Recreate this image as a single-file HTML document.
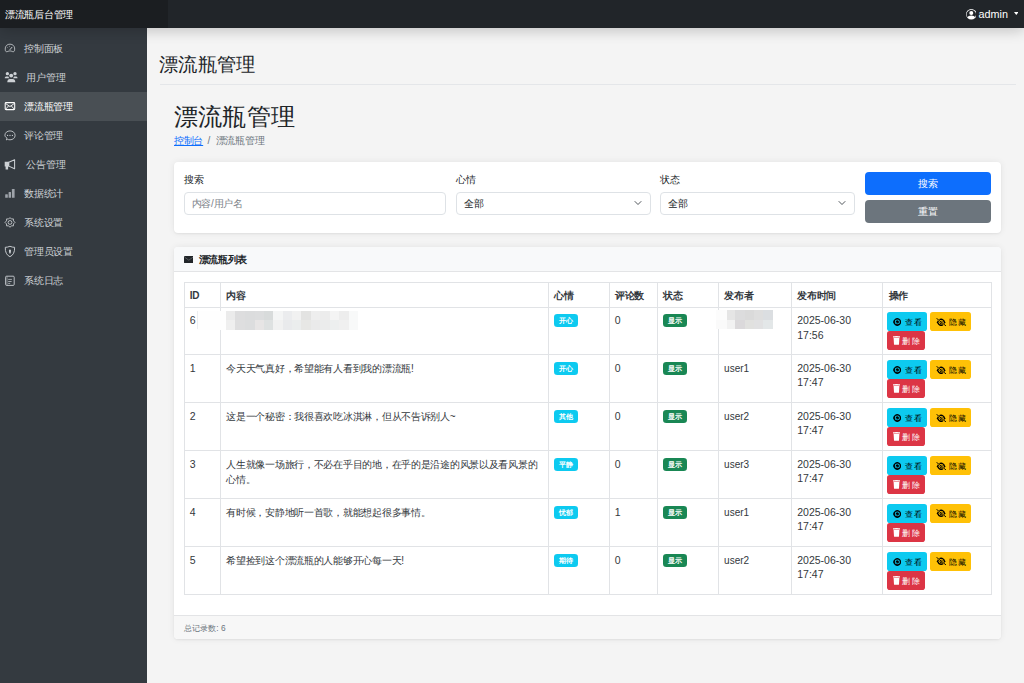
<!DOCTYPE html>
<html><head><meta charset="utf-8">
<style>
*{box-sizing:border-box;margin:0;padding:0}
html,body{width:1024px;height:683px;overflow:hidden}
body{background:#f4f4f4;font-family:"Liberation Sans",sans-serif;color:#212529;position:relative;font-size:9.7px}
.abs{position:absolute}
#nav{left:0;top:0;width:1024px;height:28px;background:#212529;box-shadow:0 3px 14px rgba(0,0,0,.2);z-index:5}
#brand{left:0;top:0;width:167.7px;height:28px;background:#1b1e21;color:#fff;font-size:10px;letter-spacing:-0.24px;line-height:29.5px;padding-left:4.8px;white-space:nowrap}
#user{right:0;top:0;height:27.5px;color:#fff}
#side{left:0;top:28px;width:147px;height:660px;background:#343a40;z-index:4}
.item{position:absolute;left:0;width:147px;height:29px;color:#cfd3d7;font-size:10px;letter-spacing:-0.28px;line-height:29px;white-space:nowrap}
.item.active{background:#494f54;color:#fff}
.item span{position:absolute;left:24.2px;top:0}
h1.t1{position:absolute;left:159.4px;top:50.5px;font-size:19px;font-weight:normal;line-height:28px;color:#212529;white-space:nowrap;transform:scaleX(1.017);transform-origin:0 0}
#hr{left:160px;top:84px;width:856px;height:1px;background:#e4e6e9}
h1.t2{position:absolute;left:173.5px;top:101px;font-size:24px;font-weight:normal;line-height:32px;color:#212529;white-space:nowrap;transform:scaleX(1.008);transform-origin:0 0}
#bc{left:174px;top:134.4px;font-size:10px;letter-spacing:-0.28px;line-height:14px;color:#6c757d;white-space:nowrap}
#bc a{color:#0d6efd;text-decoration:underline}
.card{position:absolute;left:174px;width:826.9px;background:#fff;border-radius:4px;box-shadow:0 1px 2px rgba(0,0,0,.05),0 0 7px rgba(0,0,0,.07)}
#c1{top:162.3px;height:70.4px}
#c2{top:247.1px;height:391.7px;overflow:hidden}
.lbl{position:absolute;top:173px;font-size:10px;letter-spacing:-0.28px;line-height:14px;color:#212529;white-space:nowrap}
.inp{position:absolute;top:191.5px;height:23px;border:1px solid #dee2e6;border-radius:4px;background:#fff;font-size:10px;letter-spacing:-0.28px;line-height:21px;padding-left:7px;white-space:nowrap}
.inp.ph{color:#7b8188}
.inp svg{position:absolute;right:8px;top:7px}
.btn{position:absolute;left:864.8px;width:126.5px;height:23px;border-radius:4px;color:#fff;font-size:9.7px;line-height:23px;text-align:center}
#chead{left:0;top:0;width:100%;height:24.6px;background:#f8f9fa;border-bottom:1px solid #e3e4e6}
#chead svg{position:absolute;left:9.5px;top:8.6px}
#chead span{position:absolute;left:24.5px;top:5.8px;font-size:10px;letter-spacing:-0.3px;line-height:14px;font-weight:bold;white-space:nowrap}
#cfoot{left:0;top:367.8px;width:100%;height:24px;background:#f7f7f7;border-top:1px solid #e3e4e6}
#cfoot span{position:absolute;left:9.6px;top:6px;font-size:8.3px;letter-spacing:.15px;line-height:12px;color:#6c757d;white-space:nowrap}
table{position:absolute;left:183.5px;top:282px;width:807.8px;border-collapse:collapse;table-layout:fixed;font-size:10.5px;line-height:14.5px;color:#33383d}
.cj{font-size:10px;letter-spacing:-0.28px;line-height:15px}
th.cj{line-height:14.5px}
.u{font-size:10px;padding-top:6.5px}
td,th{border:1px solid #e1e3e6;padding:5.5px 5.3px 3.5px;vertical-align:top;text-align:left}
th{font-weight:bold;height:24.6px;padding-top:6px;padding-bottom:3px}
tbody td{height:47.9px}
.badge{display:inline-block;height:13px;line-height:13px;padding:0 4.5px;border-radius:3.3px;color:#fff;font-size:7.3px;font-weight:bold;margin-top:1.2px;letter-spacing:.3px;vertical-align:top}
.b-info{background:#0dcaf0}
.b-ok{background:#198754}
.sb{position:absolute;height:18.8px;border-radius:2.8px}
.sb .ic{position:absolute}
.sb span{position:absolute;top:5.8px;font-size:8px;line-height:10px;letter-spacing:1.4px;font-weight:normal;white-space:nowrap}
.s-info{background:#0dcaf0;color:#000}
.s-warn{background:#ffc107;color:#000}
.s-dang{background:#dc3545;color:#fff}
#mos i{position:absolute;display:block}
</style></head><body>

<div id="nav" class="abs">
  <div id="brand" class="abs">漂流瓶后台管理</div>
  <svg class="abs" style="left:965.8px;top:9px" width="10.6" height="10.6" viewBox="0 0 16 16" fill="#fff"><path d="M11 6a3 3 0 1 1-6 0 3 3 0 0 1 6 0z"/><path fill-rule="evenodd" d="M0 8a8 8 0 1 1 16 0A8 8 0 0 1 0 8zm8-7a7 7 0 0 0-5.468 11.37C3.242 11.226 4.805 10 8 10s4.757 1.225 5.468 2.37A7 7 0 0 0 8 1z"/></svg>
  <div class="abs" style="left:978.6px;top:0.6px;font-size:10.8px;line-height:27.5px;color:#fff">admin</div>
  <svg class="abs" style="left:1013.5px;top:12.3px" width="4.6" height="3" viewBox="0 0 10 6"><path d="M0 0h10L5 6z" fill="#fff"/></svg>
</div>

<div id="side" class="abs">
  <div class="item" style="top:6px"><span>控制面板</span></div>
  <div class="item" style="top:35px"><span style="left:26.4px">用户管理</span></div>
  <div class="item active" style="top:64px"><span>漂流瓶管理</span></div>
  <div class="item" style="top:93px"><span>评论管理</span></div>
  <div class="item" style="top:122px"><span style="left:26.4px">公告管理</span></div>
  <div class="item" style="top:151px"><span>数据统计</span></div>
  <div class="item" style="top:180px"><span>系统设置</span></div>
  <div class="item" style="top:209px"><span>管理员设置</span></div>
  <div class="item" style="top:238px"><span>系统日志</span></div>
</div>

<svg id="sicons" class="abs" style="left:0;top:0;z-index:7" width="147" height="300" viewBox="0 0 147 300" fill="none" stroke="#cdd1d5" stroke-width="0.72">
<!-- speedometer -->
<path d="M5.4 50.6 C4.6 46.5 6.8 44.2 9.95 44.2 C13.1 44.2 15.3 46.5 14.5 50.6 C14.2 51.8 13 52 11.8 51.3 C10.6 50.8 9.3 50.8 8.1 51.3 C6.9 52 5.7 51.8 5.4 50.6Z" stroke-width="0.81"/>
<path d="M9.7 49.9 L12.2 47" stroke-width="0.94"/>
<circle cx="7.3" cy="47.6" r=".45" fill="#cdd1d5" stroke="none"/><circle cx="9.3" cy="46.3" r=".45" fill="#cdd1d5" stroke="none"/>
<!-- users -->
<g fill="#cdd1d5" stroke="none">
<circle cx="7.4" cy="73.7" r="1.65"/><circle cx="15" cy="73.7" r="1.65"/><circle cx="11.2" cy="75.6" r="1.95"/>
<path d="M4.7 78.3 C4.7 76.8 5.6 76.4 6.6 76.4 L8.4 76.4 C8.6 77.2 9 77.8 9.5 78.3Z"/>
<path d="M17.6 78.3 C17.6 76.8 16.7 76.4 15.7 76.4 L14 76.4 C13.8 77.2 13.4 77.8 12.9 78.3Z"/>
<path d="M7.3 82.2 C7.3 79.8 8.4 78.9 9.8 78.9 L12.7 78.9 C14.1 78.9 15.3 79.8 15.3 82.2Z"/>
</g>
<!-- envelope -->
<rect x="5.2" y="102.6" width="9.5" height="7" rx=".9" stroke="#fff" stroke-width="1.05"/>
<path d="M5.5 103.4 L9.95 106.6 L14.4 103.4 M5.6 109.2 L8.7 105.8 M14.3 109.2 L11.2 105.8" stroke="#fff" stroke-width=".9"/>
<!-- chat -->
<path d="M6.3 139.9 L7 138.2 C5.6 137.3 4.9 136.2 4.9 135.3 C4.9 132.7 7.2 130.9 10 130.9 C12.9 130.9 15.1 132.8 15.1 135.4 C15.1 138 12.9 139.8 10 139.8 C9 139.8 8.2 139.6 7.6 139.3Z" stroke-width="0.85"/>
<g fill="#cdd1d5" stroke="none"><circle cx="7.6" cy="135.4" r=".6"/><circle cx="10" cy="135.4" r=".6"/><circle cx="12.4" cy="135.4" r=".6"/></g>
<!-- megaphone -->
<g fill="#cdd1d5" stroke="none"><path d="M4.7 161.8 L9 161.8 L9 166.5 L8.1 166.5 L8.1 169.4 L5.6 169.4 L5.6 166.5 L4.7 166.5Z"/></g>
<path d="M8.8 162.3 L14.6 159.8 L14.6 168.8 L8.8 166.1Z" stroke-width="1.02" stroke-linejoin="round"/>
<!-- chart -->
<g fill="#9ea3aa" stroke="none"><rect x="5.2" y="194.3" width="2.6" height="3.5" rx=".4"/><rect x="8.6" y="191.9" width="2.4" height="5.9" rx=".4"/><rect x="11.9" y="189" width="2.7" height="8.8" rx=".4"/></g>
<!-- gear -->
<path d="M10 217.6 L11.4 219 L13.4 218.9 L13.5 220.9 L15 222.4 L13.5 223.9 L13.4 225.9 L11.4 225.8 L10 227.3 L8.6 225.8 L6.6 225.9 L6.5 223.9 L5 222.4 L6.5 220.9 L6.6 218.9 L8.6 219Z" stroke-width="0.85" stroke-linejoin="round"/>
<circle cx="10" cy="222.45" r="1.9" stroke-width="0.85"/>
<!-- shield -->
<path d="M9.95 246.3 C11.8 247.1 13.3 247.3 14.6 247.3 C14.9 252 13.2 255.3 9.95 256.7 C6.7 255.3 5 252 5.3 247.3 C6.6 247.3 8.1 247.1 9.95 246.3Z" stroke-width="0.94"/>
<path d="M9.95 249.6 C10.9 249.6 11.1 250.4 10.9 251.5 L10.5 253.6 L9.4 253.6 L9 251.5 C8.8 250.4 9 249.6 9.95 249.6Z" fill="#cdd1d5" stroke="none"/>
<!-- journal -->
<rect x="5.6" y="276.2" width="8.6" height="9.2" rx="1" stroke-width="0.89"/>
<path d="M7 276.4 L7 285.6" stroke-width="0.51"/>
<path d="M8.2 279.4 L11.9 279.4 M8.2 281.5 L11.6 281.5 M8.2 283.4 L10.2 283.4" stroke-width="0.72"/>
</svg>
<h1 class="t1">漂流瓶管理</h1>
<div id="hr" class="abs"></div>
<h1 class="t2">漂流瓶管理</h1>
<div id="bc" class="abs"><a>控制台</a><span style="padding:0 5.6px 0 4.4px">/</span>漂流瓶管理</div>

<div id="c1" class="card"></div>
<div class="lbl" style="left:184px">搜索</div>
<div class="lbl" style="left:456px">心情</div>
<div class="lbl" style="left:660px">状态</div>
<div class="inp ph" style="left:184px;width:262px;padding-left:6.6px">内容/用户名</div>
<div class="inp" style="left:456px;width:195px">全部<svg width="8" height="6" viewBox="0 0 16 12"><path d="M2 3l6 6 6-6" stroke="#3d434a" stroke-width="1.8" fill="none" stroke-linecap="round" stroke-linejoin="round"/></svg></div>
<div class="inp" style="left:660px;width:195px">全部<svg width="8" height="6" viewBox="0 0 16 12"><path d="M2 3l6 6 6-6" stroke="#3d434a" stroke-width="1.8" fill="none" stroke-linecap="round" stroke-linejoin="round"/></svg></div>
<div class="btn" style="top:172.4px;background:#0d6efd">搜索</div>
<div class="btn" style="top:200.2px;background:#6c757d">重置</div>

<div id="c2" class="card">
  <div id="chead" class="abs"><svg width="9.6" height="7.2" viewBox="0 0 9.6 7.2"><rect x="0" y="0" width="9.6" height="7.2" rx="1" fill="#212529"/><path d="M.6 1.2 L4.8 4.2 L9 1.2" stroke="#6c7075" stroke-width=".7" fill="none"/></svg><span>漂流瓶列表</span></div>
  <div id="cfoot" class="abs"><span>总记录数: 6</span></div>
</div>

<table>
<colgroup><col style="width:36.5px"><col style="width:328px"><col style="width:60.5px"><col style="width:48.7px"><col style="width:60.6px"><col style="width:73.2px"><col style="width:91.5px"><col style="width:108.3px"></colgroup>
<thead><tr><th class="cj">ID</th><th class="cj">内容</th><th class="cj">心情</th><th class="cj">评论数</th><th class="cj">状态</th><th class="cj">发布者</th><th class="cj">发布时间</th><th class="cj">操作</th></tr></thead>
<tbody>
<tr><td>6</td><td class="cj"></td><td><span class="badge b-info">开心</span></td><td>0</td><td><span class="badge b-ok">显示</span></td><td></td><td>2025-06-30<br>17:56</td><td></td></tr>
<tr><td>1</td><td class="cj">今天天气真好，希望能有人看到我的漂流瓶!</td><td><span class="badge b-info">开心</span></td><td>0</td><td><span class="badge b-ok">显示</span></td><td class="u">user1</td><td>2025-06-30<br>17:47</td><td></td></tr>
<tr><td>2</td><td class="cj">这是一个秘密：我很喜欢吃冰淇淋，但从不告诉别人~</td><td><span class="badge b-info">其他</span></td><td>0</td><td><span class="badge b-ok">显示</span></td><td class="u">user2</td><td>2025-06-30<br>17:47</td><td></td></tr>
<tr><td>3</td><td class="cj">人生就像一场旅行，不必在乎目的地，在乎的是沿途的风景以及看风景的心情。</td><td><span class="badge b-info">平静</span></td><td>0</td><td><span class="badge b-ok">显示</span></td><td class="u">user3</td><td>2025-06-30<br>17:47</td><td></td></tr>
<tr><td>4</td><td class="cj">有时候，安静地听一首歌，就能想起很多事情。</td><td><span class="badge b-info">忧郁</span></td><td>1</td><td><span class="badge b-ok">显示</span></td><td class="u">user1</td><td>2025-06-30<br>17:47</td><td></td></tr>
<tr><td>5</td><td class="cj">希望捡到这个漂流瓶的人能够开心每一天!</td><td><span class="badge b-info">期待</span></td><td>0</td><td><span class="badge b-ok">显示</span></td><td class="u">user2</td><td>2025-06-30<br>17:47</td><td></td></tr>
</tbody></table>

<div id="acts"><div class="sb s-info" style="left:887px;top:312.2px;width:40.2px"><svg class="ic" style="left:5.8px;top:5.8px" width="8.6" height="7.9" viewBox="0 0 8.6 7.9"><path d="M0 3.95 C1 1.2 2.6 0 4.3 0 C6 0 7.6 1.2 8.6 3.95 C7.6 6.7 6 7.9 4.3 7.9 C2.6 7.9 1 6.7 0 3.95Z" fill="#000"/><ellipse cx="4.3" cy="3.95" rx="2.55" ry="2.35" fill="#0dcaf0"/><circle cx="4.3" cy="3.95" r="1.65" fill="#000"/><circle cx="3.8" cy="4.5" r=".45" fill="#0dcaf0"/></svg><span style="left:17.8px">查看</span></div><div class="sb s-warn" style="left:930.1px;top:312.2px;width:40.8px"><svg class="ic" style="left:5.6px;top:5.6px" width="10.5" height="8.3" viewBox="0 0 10.5 8.3"><path d="M.9 4.3 C1.9 1.6 3.4 .5 5.1 .5 C6.8 .5 8.3 1.6 9.3 4.3 C8.3 7 6.8 8.1 5.1 8.1 C3.4 8.1 1.9 7 .9 4.3Z" fill="#000"/><ellipse cx="5.1" cy="4.3" rx="2.5" ry="2.3" fill="#ffc107"/><circle cx="5.2" cy="4.4" r="1.6" fill="#000"/><path d="M.6 .3 L10 8" stroke="#ffc107" stroke-width="1.6"/><path d="M.4 .2 L10.2 8.1" stroke="#000" stroke-width=".9"/></svg><span style="left:18.8px">隐藏</span></div><div class="sb s-dang" style="left:887.2px;top:331.4px;width:37.6px"><svg class="ic" style="left:5.4px;top:4.9px" width="7" height="8.8" viewBox="0 0 7 8.8"><rect x="0" y="0.2" width="7" height="1.3" rx=".3" fill="#fff"/><rect x="2.3" y="0" width="2.4" height=".8" fill="#fff"/><path d="M.6 1.9 H6.4 L6 8.3 Q6 8.8 5.5 8.8 H1.5 Q1 8.8 1 8.3Z" fill="#fff"/></svg><span style="left:15.1px">删除</span></div><div class="sb s-info" style="left:887px;top:360.1px;width:40.2px"><svg class="ic" style="left:5.8px;top:5.8px" width="8.6" height="7.9" viewBox="0 0 8.6 7.9"><path d="M0 3.95 C1 1.2 2.6 0 4.3 0 C6 0 7.6 1.2 8.6 3.95 C7.6 6.7 6 7.9 4.3 7.9 C2.6 7.9 1 6.7 0 3.95Z" fill="#000"/><ellipse cx="4.3" cy="3.95" rx="2.55" ry="2.35" fill="#0dcaf0"/><circle cx="4.3" cy="3.95" r="1.65" fill="#000"/><circle cx="3.8" cy="4.5" r=".45" fill="#0dcaf0"/></svg><span style="left:17.8px">查看</span></div><div class="sb s-warn" style="left:930.1px;top:360.1px;width:40.8px"><svg class="ic" style="left:5.6px;top:5.6px" width="10.5" height="8.3" viewBox="0 0 10.5 8.3"><path d="M.9 4.3 C1.9 1.6 3.4 .5 5.1 .5 C6.8 .5 8.3 1.6 9.3 4.3 C8.3 7 6.8 8.1 5.1 8.1 C3.4 8.1 1.9 7 .9 4.3Z" fill="#000"/><ellipse cx="5.1" cy="4.3" rx="2.5" ry="2.3" fill="#ffc107"/><circle cx="5.2" cy="4.4" r="1.6" fill="#000"/><path d="M.6 .3 L10 8" stroke="#ffc107" stroke-width="1.6"/><path d="M.4 .2 L10.2 8.1" stroke="#000" stroke-width=".9"/></svg><span style="left:18.8px">隐藏</span></div><div class="sb s-dang" style="left:887.2px;top:379.3px;width:37.6px"><svg class="ic" style="left:5.4px;top:4.9px" width="7" height="8.8" viewBox="0 0 7 8.8"><rect x="0" y="0.2" width="7" height="1.3" rx=".3" fill="#fff"/><rect x="2.3" y="0" width="2.4" height=".8" fill="#fff"/><path d="M.6 1.9 H6.4 L6 8.3 Q6 8.8 5.5 8.8 H1.5 Q1 8.8 1 8.3Z" fill="#fff"/></svg><span style="left:15.1px">删除</span></div><div class="sb s-info" style="left:887px;top:408.1px;width:40.2px"><svg class="ic" style="left:5.8px;top:5.8px" width="8.6" height="7.9" viewBox="0 0 8.6 7.9"><path d="M0 3.95 C1 1.2 2.6 0 4.3 0 C6 0 7.6 1.2 8.6 3.95 C7.6 6.7 6 7.9 4.3 7.9 C2.6 7.9 1 6.7 0 3.95Z" fill="#000"/><ellipse cx="4.3" cy="3.95" rx="2.55" ry="2.35" fill="#0dcaf0"/><circle cx="4.3" cy="3.95" r="1.65" fill="#000"/><circle cx="3.8" cy="4.5" r=".45" fill="#0dcaf0"/></svg><span style="left:17.8px">查看</span></div><div class="sb s-warn" style="left:930.1px;top:408.1px;width:40.8px"><svg class="ic" style="left:5.6px;top:5.6px" width="10.5" height="8.3" viewBox="0 0 10.5 8.3"><path d="M.9 4.3 C1.9 1.6 3.4 .5 5.1 .5 C6.8 .5 8.3 1.6 9.3 4.3 C8.3 7 6.8 8.1 5.1 8.1 C3.4 8.1 1.9 7 .9 4.3Z" fill="#000"/><ellipse cx="5.1" cy="4.3" rx="2.5" ry="2.3" fill="#ffc107"/><circle cx="5.2" cy="4.4" r="1.6" fill="#000"/><path d="M.6 .3 L10 8" stroke="#ffc107" stroke-width="1.6"/><path d="M.4 .2 L10.2 8.1" stroke="#000" stroke-width=".9"/></svg><span style="left:18.8px">隐藏</span></div><div class="sb s-dang" style="left:887.2px;top:427.3px;width:37.6px"><svg class="ic" style="left:5.4px;top:4.9px" width="7" height="8.8" viewBox="0 0 7 8.8"><rect x="0" y="0.2" width="7" height="1.3" rx=".3" fill="#fff"/><rect x="2.3" y="0" width="2.4" height=".8" fill="#fff"/><path d="M.6 1.9 H6.4 L6 8.3 Q6 8.8 5.5 8.8 H1.5 Q1 8.8 1 8.3Z" fill="#fff"/></svg><span style="left:15.1px">删除</span></div><div class="sb s-info" style="left:887px;top:456.0px;width:40.2px"><svg class="ic" style="left:5.8px;top:5.8px" width="8.6" height="7.9" viewBox="0 0 8.6 7.9"><path d="M0 3.95 C1 1.2 2.6 0 4.3 0 C6 0 7.6 1.2 8.6 3.95 C7.6 6.7 6 7.9 4.3 7.9 C2.6 7.9 1 6.7 0 3.95Z" fill="#000"/><ellipse cx="4.3" cy="3.95" rx="2.55" ry="2.35" fill="#0dcaf0"/><circle cx="4.3" cy="3.95" r="1.65" fill="#000"/><circle cx="3.8" cy="4.5" r=".45" fill="#0dcaf0"/></svg><span style="left:17.8px">查看</span></div><div class="sb s-warn" style="left:930.1px;top:456.0px;width:40.8px"><svg class="ic" style="left:5.6px;top:5.6px" width="10.5" height="8.3" viewBox="0 0 10.5 8.3"><path d="M.9 4.3 C1.9 1.6 3.4 .5 5.1 .5 C6.8 .5 8.3 1.6 9.3 4.3 C8.3 7 6.8 8.1 5.1 8.1 C3.4 8.1 1.9 7 .9 4.3Z" fill="#000"/><ellipse cx="5.1" cy="4.3" rx="2.5" ry="2.3" fill="#ffc107"/><circle cx="5.2" cy="4.4" r="1.6" fill="#000"/><path d="M.6 .3 L10 8" stroke="#ffc107" stroke-width="1.6"/><path d="M.4 .2 L10.2 8.1" stroke="#000" stroke-width=".9"/></svg><span style="left:18.8px">隐藏</span></div><div class="sb s-dang" style="left:887.2px;top:475.2px;width:37.6px"><svg class="ic" style="left:5.4px;top:4.9px" width="7" height="8.8" viewBox="0 0 7 8.8"><rect x="0" y="0.2" width="7" height="1.3" rx=".3" fill="#fff"/><rect x="2.3" y="0" width="2.4" height=".8" fill="#fff"/><path d="M.6 1.9 H6.4 L6 8.3 Q6 8.8 5.5 8.8 H1.5 Q1 8.8 1 8.3Z" fill="#fff"/></svg><span style="left:15.1px">删除</span></div><div class="sb s-info" style="left:887px;top:503.9px;width:40.2px"><svg class="ic" style="left:5.8px;top:5.8px" width="8.6" height="7.9" viewBox="0 0 8.6 7.9"><path d="M0 3.95 C1 1.2 2.6 0 4.3 0 C6 0 7.6 1.2 8.6 3.95 C7.6 6.7 6 7.9 4.3 7.9 C2.6 7.9 1 6.7 0 3.95Z" fill="#000"/><ellipse cx="4.3" cy="3.95" rx="2.55" ry="2.35" fill="#0dcaf0"/><circle cx="4.3" cy="3.95" r="1.65" fill="#000"/><circle cx="3.8" cy="4.5" r=".45" fill="#0dcaf0"/></svg><span style="left:17.8px">查看</span></div><div class="sb s-warn" style="left:930.1px;top:503.9px;width:40.8px"><svg class="ic" style="left:5.6px;top:5.6px" width="10.5" height="8.3" viewBox="0 0 10.5 8.3"><path d="M.9 4.3 C1.9 1.6 3.4 .5 5.1 .5 C6.8 .5 8.3 1.6 9.3 4.3 C8.3 7 6.8 8.1 5.1 8.1 C3.4 8.1 1.9 7 .9 4.3Z" fill="#000"/><ellipse cx="5.1" cy="4.3" rx="2.5" ry="2.3" fill="#ffc107"/><circle cx="5.2" cy="4.4" r="1.6" fill="#000"/><path d="M.6 .3 L10 8" stroke="#ffc107" stroke-width="1.6"/><path d="M.4 .2 L10.2 8.1" stroke="#000" stroke-width=".9"/></svg><span style="left:18.8px">隐藏</span></div><div class="sb s-dang" style="left:887.2px;top:523.1px;width:37.6px"><svg class="ic" style="left:5.4px;top:4.9px" width="7" height="8.8" viewBox="0 0 7 8.8"><rect x="0" y="0.2" width="7" height="1.3" rx=".3" fill="#fff"/><rect x="2.3" y="0" width="2.4" height=".8" fill="#fff"/><path d="M.6 1.9 H6.4 L6 8.3 Q6 8.8 5.5 8.8 H1.5 Q1 8.8 1 8.3Z" fill="#fff"/></svg><span style="left:15.1px">删除</span></div><div class="sb s-info" style="left:887px;top:551.9px;width:40.2px"><svg class="ic" style="left:5.8px;top:5.8px" width="8.6" height="7.9" viewBox="0 0 8.6 7.9"><path d="M0 3.95 C1 1.2 2.6 0 4.3 0 C6 0 7.6 1.2 8.6 3.95 C7.6 6.7 6 7.9 4.3 7.9 C2.6 7.9 1 6.7 0 3.95Z" fill="#000"/><ellipse cx="4.3" cy="3.95" rx="2.55" ry="2.35" fill="#0dcaf0"/><circle cx="4.3" cy="3.95" r="1.65" fill="#000"/><circle cx="3.8" cy="4.5" r=".45" fill="#0dcaf0"/></svg><span style="left:17.8px">查看</span></div><div class="sb s-warn" style="left:930.1px;top:551.9px;width:40.8px"><svg class="ic" style="left:5.6px;top:5.6px" width="10.5" height="8.3" viewBox="0 0 10.5 8.3"><path d="M.9 4.3 C1.9 1.6 3.4 .5 5.1 .5 C6.8 .5 8.3 1.6 9.3 4.3 C8.3 7 6.8 8.1 5.1 8.1 C3.4 8.1 1.9 7 .9 4.3Z" fill="#000"/><ellipse cx="5.1" cy="4.3" rx="2.5" ry="2.3" fill="#ffc107"/><circle cx="5.2" cy="4.4" r="1.6" fill="#000"/><path d="M.6 .3 L10 8" stroke="#ffc107" stroke-width="1.6"/><path d="M.4 .2 L10.2 8.1" stroke="#000" stroke-width=".9"/></svg><span style="left:18.8px">隐藏</span></div><div class="sb s-dang" style="left:887.2px;top:571.1px;width:37.6px"><svg class="ic" style="left:5.4px;top:4.9px" width="7" height="8.8" viewBox="0 0 7 8.8"><rect x="0" y="0.2" width="7" height="1.3" rx=".3" fill="#fff"/><rect x="2.3" y="0" width="2.4" height=".8" fill="#fff"/><path d="M.6 1.9 H6.4 L6 8.3 Q6 8.8 5.5 8.8 H1.5 Q1 8.8 1 8.3Z" fill="#fff"/></svg><span style="left:15.1px">删除</span></div></div>
<div id="mos"><i style="left:197.2px;top:311px;width:.8px;height:18.4px;background:#eceef0;z-index:2"></i><i style="left:197.4px;top:310.9px;width:9.8px;height:9.5px;background:#fefefe"></i><i style="left:206.9px;top:310.9px;width:9.9px;height:9.5px;background:#fefefe"></i><i style="left:216.5px;top:310.9px;width:9.9px;height:9.5px;background:#fefefe"></i><i style="left:226.1px;top:310.9px;width:9.6px;height:9.5px;background:#ebebeb"></i><i style="left:235.4px;top:310.9px;width:9.6px;height:9.5px;background:#ddddde"></i><i style="left:244.7px;top:310.9px;width:10.1px;height:9.5px;background:#dbdcdd"></i><i style="left:254.5px;top:310.9px;width:9.5px;height:9.5px;background:#dcddde"></i><i style="left:263.7px;top:310.9px;width:10.0px;height:9.5px;background:#d8dbdb"></i><i style="left:273.4px;top:310.9px;width:9.6px;height:9.5px;background:#f4f5f5"></i><i style="left:282.7px;top:310.9px;width:9.6px;height:9.5px;background:#ebecee"></i><i style="left:292px;top:310.9px;width:9.6px;height:9.5px;background:#f1f1f1"></i><i style="left:301.3px;top:310.9px;width:10.0px;height:9.5px;background:#e3e3e2"></i><i style="left:311px;top:310.9px;width:9.6px;height:9.5px;background:#eeeeee"></i><i style="left:320.3px;top:310.9px;width:9.6px;height:9.5px;background:#ececec"></i><i style="left:329.6px;top:310.9px;width:10.0px;height:9.5px;background:#f4f4f4"></i><i style="left:339.3px;top:310.9px;width:9.9px;height:9.5px;background:#ededed"></i><i style="left:348.9px;top:310.9px;width:9.4px;height:9.5px;background:#f8f9f9"></i><i style="left:197.4px;top:320.1px;width:9.8px;height:9.6px;background:#fefefe"></i><i style="left:206.9px;top:320.1px;width:9.9px;height:9.6px;background:#fefefe"></i><i style="left:216.5px;top:320.1px;width:9.9px;height:9.6px;background:#fefefe"></i><i style="left:226.1px;top:320.1px;width:9.6px;height:9.6px;background:#efefef"></i><i style="left:235.4px;top:320.1px;width:9.6px;height:9.6px;background:#dededf"></i><i style="left:244.7px;top:320.1px;width:10.1px;height:9.6px;background:#dcddde"></i><i style="left:254.5px;top:320.1px;width:9.5px;height:9.6px;background:#e7e5e5"></i><i style="left:263.7px;top:320.1px;width:10.0px;height:9.6px;background:#dee1e1"></i><i style="left:273.4px;top:320.1px;width:9.6px;height:9.6px;background:#f1f1f1"></i><i style="left:282.7px;top:320.1px;width:9.6px;height:9.6px;background:#e9eaec"></i><i style="left:292px;top:320.1px;width:9.6px;height:9.6px;background:#ebeded"></i><i style="left:301.3px;top:320.1px;width:10.0px;height:9.6px;background:#e7e7e5"></i><i style="left:311px;top:320.1px;width:9.6px;height:9.6px;background:#eaeaea"></i><i style="left:320.3px;top:320.1px;width:9.6px;height:9.6px;background:#ebecec"></i><i style="left:329.6px;top:320.1px;width:10.0px;height:9.6px;background:#edefef"></i><i style="left:339.3px;top:320.1px;width:9.9px;height:9.6px;background:#f0f0f0"></i><i style="left:348.9px;top:320.1px;width:9.4px;height:9.6px;background:#f8f9f9"></i><i style="left:716.2px;top:310.2px;width:11.0px;height:10.0px;background:#fcfcfc"></i><i style="left:726.9px;top:310.2px;width:8.6px;height:10.0px;background:#e5e5e5"></i><i style="left:735.2px;top:310.2px;width:9.6px;height:10.0px;background:#dcdcdd"></i><i style="left:744.5px;top:310.2px;width:9.5px;height:10.0px;background:#dadada"></i><i style="left:753.7px;top:310.2px;width:9.6px;height:10.0px;background:#dedede"></i><i style="left:763px;top:310.2px;width:10.1px;height:10.0px;background:#dbdee1"></i><i style="left:716.2px;top:319.9px;width:11.0px;height:8.9px;background:#fafafa"></i><i style="left:726.9px;top:319.9px;width:8.6px;height:8.9px;background:#f2f2f2"></i><i style="left:735.2px;top:319.9px;width:9.6px;height:8.9px;background:#dbd9db"></i><i style="left:744.5px;top:319.9px;width:9.5px;height:8.9px;background:#e1e1df"></i><i style="left:753.7px;top:319.9px;width:9.6px;height:8.9px;background:#e1e1e2"></i><i style="left:763px;top:319.9px;width:10.1px;height:8.9px;background:#e3e7e8"></i></div>
</body></html>
